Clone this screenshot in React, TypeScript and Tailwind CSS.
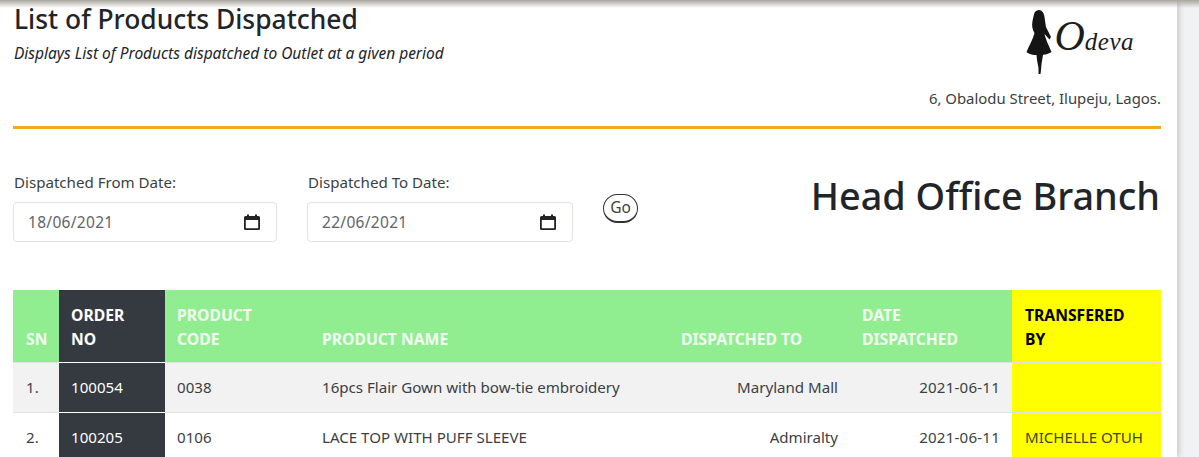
import React from 'react';

// Dispatch rows shown in the table
const ROWS = [
  { sn: '1.', order: '100054', code: '0038', name: '16pcs Flair Gown with bow-tie embroidery', to: 'Maryland Mall', date: '2021-06-11', by: '' },
  { sn: '2.', order: '100205', code: '0106', name: 'LACE TOP WITH PUFF SLEEVE', to: 'Admiralty', date: '2021-06-11', by: 'MICHELLE OTUH' },
];

const CalendarIcon = () => (
  <svg width="16" height="16" viewBox="0 0 16 16" className="shrink-0">
    <path d="M3 0.5h2V2h6V0.5h2V2h1.5A1.5 1.5 0 0 1 16 3.5v11a1.5 1.5 0 0 1-1.5 1.5h-13A1.5 1.5 0 0 1 0 14.5v-11A1.5 1.5 0 0 1 1.5 2H3z M1.8 6v8.2h12.4V6z" fill="#222" fillRule="evenodd" />
  </svg>
);

const DateField = ({ label, value, width }: { label: string; value: string; width: string }) => (
  <div className={width}>
    <div className="h-[24px] pl-[1px] text-[15.1px] leading-[24px] text-[#3a3f44]">{label}</div>
    <div className="mt-[8px] flex h-[40px] items-center justify-between rounded-[4px] border border-[#dfe2e6] bg-white pl-[14px] pr-[16px]">
      <span className="pt-[1px] text-[15.5px] tracking-[0.3px] text-[#5f656b]">{value}</span>
      <CalendarIcon />
    </div>
  </div>
);

const Logo = () => (
  <div className="flex items-start">
    <svg width="26" height="66" viewBox="0 0 26 66">
      <path
        d="M13 0C16 0 18 3 18.5 7C19 11 19.5 14 20 17L25 27L23.5 29.500L18.5 24C19.5 29 23 36 25.5 42C20 45 18 44.500 17 45L15.5 54L15 60L14.500 64L12.500 64L12.500 58L11 50L10.500 45C8 45 3 44.500 0.500 42C3 36 7 29 8.500 23C6.500 20 5.500 16 6.500 11C7.500 7 8 3 9 2C10 1 11 0 13 0Z"
        fill="#141414"
      />
    </svg>
    <div className='ml-[2px] mt-[5px] flex items-baseline font-["Liberation_Serif",serif] italic leading-none text-[#1c1c1c]'>
      <span className="text-[42px]">O</span>
      <span className="text-[25px] tracking-[0.5px]">deva</span>
    </div>
  </div>
);

export default function App() {
  return (
    <div className='relative flex h-[457px] w-[1199px] overflow-hidden bg-[#f1f2f4] font-["Noto_Sans","Open_Sans",sans-serif]'>
      <div className="h-full w-[1177px] bg-white pl-[13px] pr-[16px] shadow-[2px_0_6px_rgba(0,0,0,0.18)]">
        {/* Page heading */}
        <div className="flex h-[129px] justify-between border-b-[3px] border-[#f5a81c]">
          <div className="pl-[1px] pt-[1px]">
            <h3 className="text-[26.4px] font-medium leading-[36px] text-[#212529]">List of Products Dispatched</h3>
            <p className="mt-[6px] text-[15.5px] italic leading-[21px] text-[#212529]">Displays List of Products dispatched to Outlet at a given period</p>
          </div>
          <div className="flex flex-col items-end">
            <div className="mr-[27px] mt-[10px]">
              <Logo />
            </div>
            <p className="mt-[12px] text-[14.9px] leading-[21px] text-[#3a3f44]">6, Obalodu Street, Ilupeju, Lagos.</p>
          </div>
        </div>

        {/* Date filter */}
        <div className="mt-[41px] flex h-[120px] items-start">
          <DateField label="Dispatched From Date:" value="18/06/2021" width="w-[264px]" />
          <div className="ml-[30px]">
            <DateField label="Dispatched To Date:" value="22/06/2021" width="w-[266px]" />
          </div>
          <button className="ml-[30px] mt-[24px] flex h-[29px] w-[35px] items-center justify-center rounded-full border border-b-2 border-[#333] bg-white text-[15.5px] text-[#3a3f44]">
            Go
          </button>
          <h1 className="ml-auto mt-[2px] pr-[1px] text-[37.8px] font-medium leading-[48px] text-[#212529]">Head Office Branch</h1>
        </div>

        {/* Dispatch table */}
        <table className="w-[1148px] table-fixed border-collapse text-[15.1px]">
          <colgroup>
            <col className="w-[46px]" />
            <col className="w-[106px]" />
            <col className="w-[145px]" />
            <col className="w-[359px]" />
            <col className="w-[181px]" />
            <col className="w-[162px]" />
            <col className="w-[149px]" />
          </colgroup>
          <thead>
            <tr className="h-[72px] bg-[#90ee90] text-left align-bottom text-[15.7px] font-bold uppercase leading-[24px] text-[#f4fdf4]">
              <th className="pb-[11px] pl-[13px]">SN</th>
              <th className="bg-[#343a40] pb-[11px] pl-[12px] text-white">Order<br />No</th>
              <th className="pb-[11px] pl-[12px]">Product<br />Code</th>
              <th className="pb-[11px] pl-[12px]">Product Name</th>
              <th className="pb-[11px] pl-[12px]">Dispatched To</th>
              <th className="pb-[11px] pl-[12px]">Date<br />Dispatched</th>
              <th className="bg-[#ffff00] pb-[11px] pl-[13px] text-black">Transfered<br />By</th>
            </tr>
          </thead>
          <tbody>
            {ROWS.map((row, index) => (
              <tr key={row.order} className={`h-[50px] border-t border-[#dee2e6] text-[#3a3f44] ${index % 2 === 0 ? 'bg-[#f2f2f2]' : 'bg-white'}`}>
                <td className="pl-[13px]">{row.sn}</td>
                <td className="border-t border-white bg-[#343a40] pl-[12px] text-white">{row.order}</td>
                <td className="pl-[12px]">{row.code}</td>
                <td className="pl-[12px]">{row.name}</td>
                <td className="pr-[12px] text-right">{row.to}</td>
                <td className="pr-[12px] text-right tracking-[0.2px]">{row.date}</td>
                <td className="bg-[#ffff00] pl-[13px] text-[#44442a]">{row.by}</td>
              </tr>
            ))}
          </tbody>
        </table>
      </div>

      {/* Shadow along the top edge */}
      <div className="pointer-events-none absolute inset-x-0 top-0 h-[8px] bg-gradient-to-b from-[#a9a69e] to-transparent" />
    </div>
  );
}
